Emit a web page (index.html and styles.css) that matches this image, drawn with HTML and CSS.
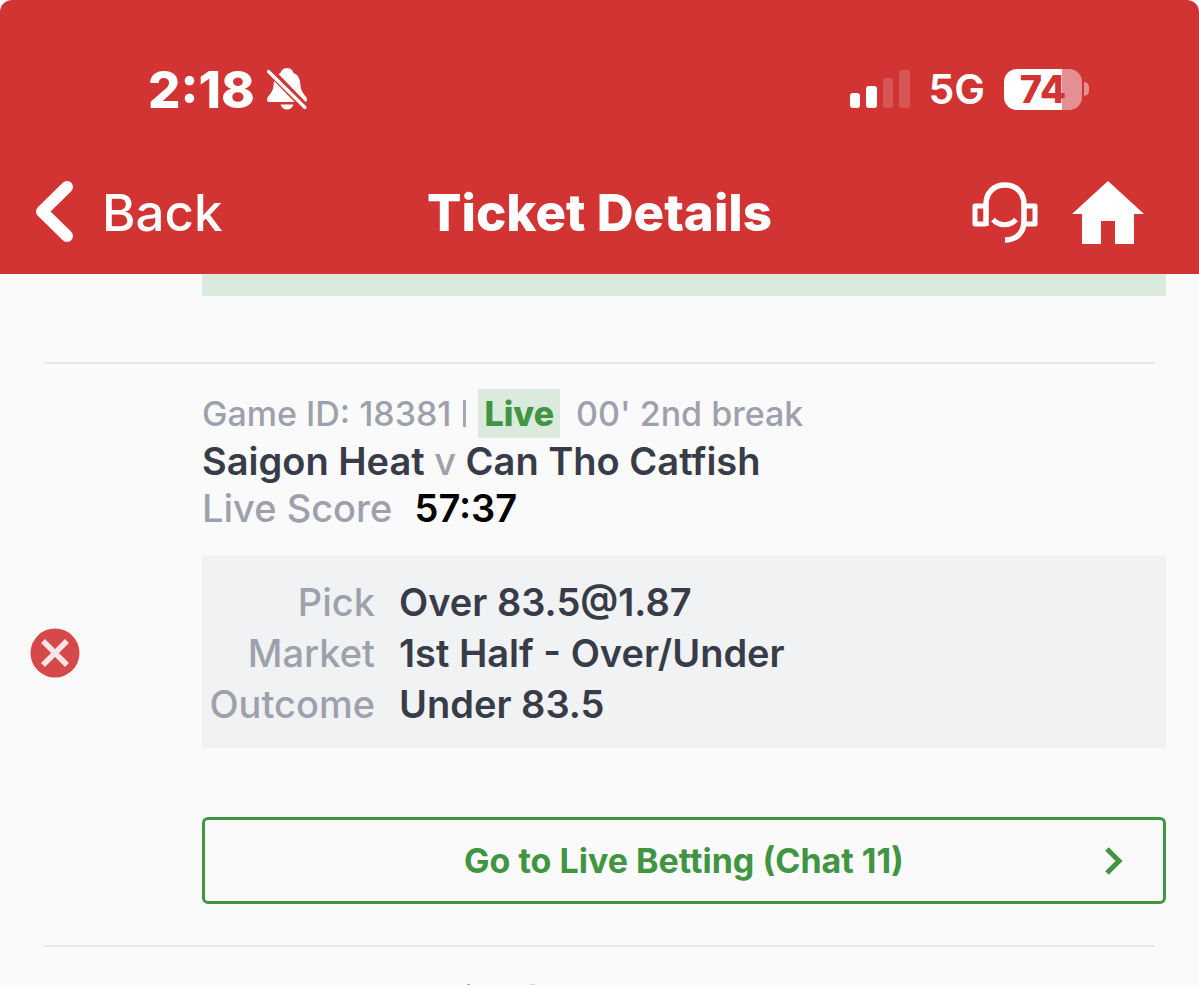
FILE: index.html
```html
<!DOCTYPE html>
<html lang="en">
<head>
  <meta charset="UTF-8" />
  <meta name="viewport" content="width=device-width, initial-scale=1.0" />
  <title>Ticket Details</title>
  <link rel="stylesheet" href="styles.css">
</head>
<body>
  <header class="header">
    <div class="status-bar">
      <div class="status-left">
        <span class="time">2:18</span>
        <svg class="icon-bell" viewBox="0 0 42 44" aria-hidden="true">
          <path d="M21 1c-4 0-6 3-6.500 5C9 8 8 13 7.500 19 7 26 1 29 1 33c0 1 1 2 2.500 2h35c1.500 0 2.500-1 2.500-2 0-4-6-7-6.500-14C34 13 33 8 27.500 6 27 4 25 1 21 1Z" fill="#fff"/>
          <path d="M14.500 37.500h13c-1 3-3.500 5-6.500 5s-5.500-2-6.500-5Z" fill="#fff"/>
          <path d="M3 3 39 40" stroke="#d23434" stroke-width="8"/>
          <path d="M2.500 4.500 39 40.500" stroke="#fff" stroke-width="3.200" stroke-linecap="round"/>
        </svg>
      </div>
      <div class="status-right">
        <svg class="icon-signal" viewBox="0 0 60 38" aria-hidden="true">
          <rect x="0" y="23" width="10" height="15" rx="3" fill="#fff"/>
          <rect x="16" y="16" width="11" height="22" rx="3" fill="#fff"/>
          <rect x="33" y="8" width="10" height="30" rx="3" fill="#fff" opacity=".17"/>
          <rect x="49" y="0" width="11" height="38" rx="3" fill="#fff" opacity=".17"/>
        </svg>
        <span class="network">5G</span>
        <div class="battery">
          <span class="battery-level">74</span>
          <span class="battery-cap"></span>
        </div>
      </div>
    </div>

    <nav class="nav">
      <a class="back" href="#">
        <svg class="icon-back" viewBox="0 0 38 62" aria-hidden="true">
          <path d="M31 6 6 30.500 31 55" fill="none" stroke="#fff" stroke-width="12" stroke-linecap="round" stroke-linejoin="round"/>
        </svg>
        Back
      </a>
      <h1 class="title">Ticket Details</h1>
      <div class="nav-actions">
        <a href="#" aria-label="Support">
          <svg class="icon-support" viewBox="0 0 66 62" aria-hidden="true">
            <g fill="none" stroke="#fff" stroke-width="5">
              <path d="M14 45V23C14 11.500 22 4 33 4S52 11.500 52 23v17c0 11-7 19-19 19" stroke-width="5.500"/>
              <path d="M14 25H3v18h11M52 25h11v18H52" stroke-linejoin="round"/>
              <path d="M21 38.500c6 7 17 7 23 0"/>
            </g>
          </svg>
        </a>
        <a href="#" aria-label="Home">
          <svg class="icon-home" viewBox="0 0 72 64" aria-hidden="true">
            <path d="M36 1 72 34H62v30H43V41H29v23H10V34H0Z" fill="#fff"/>
          </svg>
        </a>
      </div>
    </nav>
  </header>

  <main class="ticket-list">
    <div class="previous-end"></div>

    <hr class="divider">

    <section class="ticket">
      <div class="result">
        <svg class="icon-lost" viewBox="0 0 50 50" role="img" aria-label="Lost">
          <circle cx="25" cy="25" r="24.500" fill="#d6494b"/>
          <path d="m13 13 24 24M37 13 13 37" stroke="#fbe4e5" stroke-width="5.500"/>
        </svg>
      </div>
      <div class="ticket-body">
        <div class="game-info">
          <span>Game ID: 18381</span>
          <span class="separator"></span>
          <span class="live">Live</span>
          <span class="period">00' 2nd break</span>
        </div>
        <h2 class="teams">Saigon Heat <span class="versus">v</span> Can Tho Catfish</h2>
        <div class="score">Live Score <span class="score-value">57:37</span></div>

        <dl class="details">
          <dt>Pick</dt>
          <dd>Over 83.5@1.87</dd>
          <dt>Market</dt>
          <dd>1st Half - Over/Under</dd>
          <dt>Outcome</dt>
          <dd>Under 83.5</dd>
        </dl>

        <button class="live-btn" type="button">
          <span class="live-btn-text">Go to Live Betting (Chat 11)</span>
          <svg class="icon-next" viewBox="0 0 18 28" aria-hidden="true">
            <path d="m2 2 12 12L2 26" fill="none" stroke="#419441" stroke-width="5"/>
          </svg>
        </button>
      </div>
    </section>

    <hr class="divider">

    <div class="next-start">
      <span class="separator"></span>
      <span class="next-mark"></span>
    </div>
  </main>
</body>
</html>
```
FILE: styles.css
```css
* {
  box-sizing: border-box;
}

body {
  font-family: Inter, "Liberation Sans", sans-serif;
  font-weight: 500;
  background: #fafafa;
  color: #373c48;
  margin: 0;
  height: 100vh;
  overflow: hidden;
}

a {
  color: inherit;
  text-decoration: none;
}

svg {
  display: block;
  flex: none;
}

/* Header */
.header {
  background: #d23434;
  color: white;
  padding-top: 59px;
  border-radius: 12px 12px 0 0;
}

.status-bar {
  display: flex;
  justify-content: space-between;
  align-items: center;
  height: 60px;
  padding: 0 110px 0 148px;
}

.status-left,
.status-right {
  display: flex;
  align-items: center;
}

.status-left {
  gap: 11px;
}

.status-right {
  gap: 19px;
}

.time {
  font-size: 51px;
  font-weight: 800;
}

.network {
  font-size: 41px;
  font-weight: 600;
}

.icon-bell {
  width: 42px;
  height: 44px;
}

.icon-signal {
  width: 60px;
  height: 38px;
}

.battery {
  display: flex;
  align-items: center;
  gap: 2px;
}

.battery-level {
  width: 78px;
  height: 41px;
  border-radius: 13px;
  background: linear-gradient(to right, white 74%, #e68f92 74%);
  color: #d23434;
  font-size: 38px;
  font-weight: 800;
  line-height: 41px;
  text-align: center;
}

.battery-cap {
  width: 5px;
  height: 14px;
  border-radius: 0 7px 7px 0;
  background: #e68f92;
}

.nav {
  display: grid;
  grid-template-columns: 1fr auto 1fr;
  align-items: center;
  height: 155px;
  padding: 31px 36px 0;
}

.back {
  display: flex;
  align-items: center;
  gap: 28px;
  font-size: 51px;
}

.icon-back {
  width: 38px;
  height: 62px;
}

.title {
  margin: 0;
  font-size: 51px;
  font-weight: 800;
}

.nav-actions {
  display: flex;
  justify-content: flex-end;
  align-items: center;
  gap: 34px;
  padding-right: 19px;
}

.icon-support {
  width: 66px;
  height: 62px;
}

.icon-home {
  width: 72px;
  height: 64px;
}

/* Tickets */
.previous-end {
  height: 22px;
  margin: 0 33px 66px 202px;
  background: #daeadd;
}

.divider {
  height: 2px;
  margin: 0 44px;
  border: none;
  background: #e6e7ee;
}

.ticket {
  display: grid;
  grid-template-columns: 172px 1fr;
  padding: 0 33px 0 30px;
}

.ticket-body {
  padding: 25px 0 41px;
}

.result {
  display: flex;
  align-items: center;
  padding-bottom: 4px;
}

.icon-lost {
  width: 50px;
  height: 50px;
}

.game-info {
  display: flex;
  align-items: center;
  height: 49px;
  color: #9da1ac;
  font-size: 34px;
}

.separator {
  width: 3px;
  height: 27px;
  margin: 0 12px;
  background: #a5a8b1;
}

.live {
  padding: 0 6px;
  background: #daeadd;
  color: #419441;
  font-weight: 800;
  line-height: 49px;
}

.period {
  margin-left: 16px;
}

.teams,
.score {
  margin: 0;
  font-size: 38px;
  font-weight: 600;
  line-height: 47px;
}

.versus,
.score {
  color: #9da1ac;
  font-weight: 500;
}

.score-value {
  margin-left: 12px;
  color: black;
  font-weight: 600;
}

.details {
  display: grid;
  grid-template-columns: 173px 1fr;
  column-gap: 24px;
  margin: 23px 0 69px;
  padding: 22px 0 18px;
  background: #f1f2f4;
  font-size: 38px;
  line-height: 51px;
}

.details dt {
  color: #9da1ac;
  text-align: right;
}

.details dd {
  margin: 0;
  font-weight: 600;
}

.live-btn {
  display: flex;
  align-items: center;
  width: 100%;
  height: 87px;
  padding: 0 40px 0 58px;
  border: 3px solid #419441;
  border-radius: 6px;
  background: transparent;
  color: #419441;
  font-family: inherit;
  font-size: 34px;
  font-weight: 700;
  cursor: pointer;
}

.live-btn-text {
  flex: 1;
}

.icon-next {
  width: 18px;
  height: 28px;
}

.next-start {
  display: flex;
  padding: 37px 33px 0 455px;
}

.next-mark {
  width: 5px;
  height: 27px;
  margin-left: 48px;
  background: #d5d6da;
}
```
